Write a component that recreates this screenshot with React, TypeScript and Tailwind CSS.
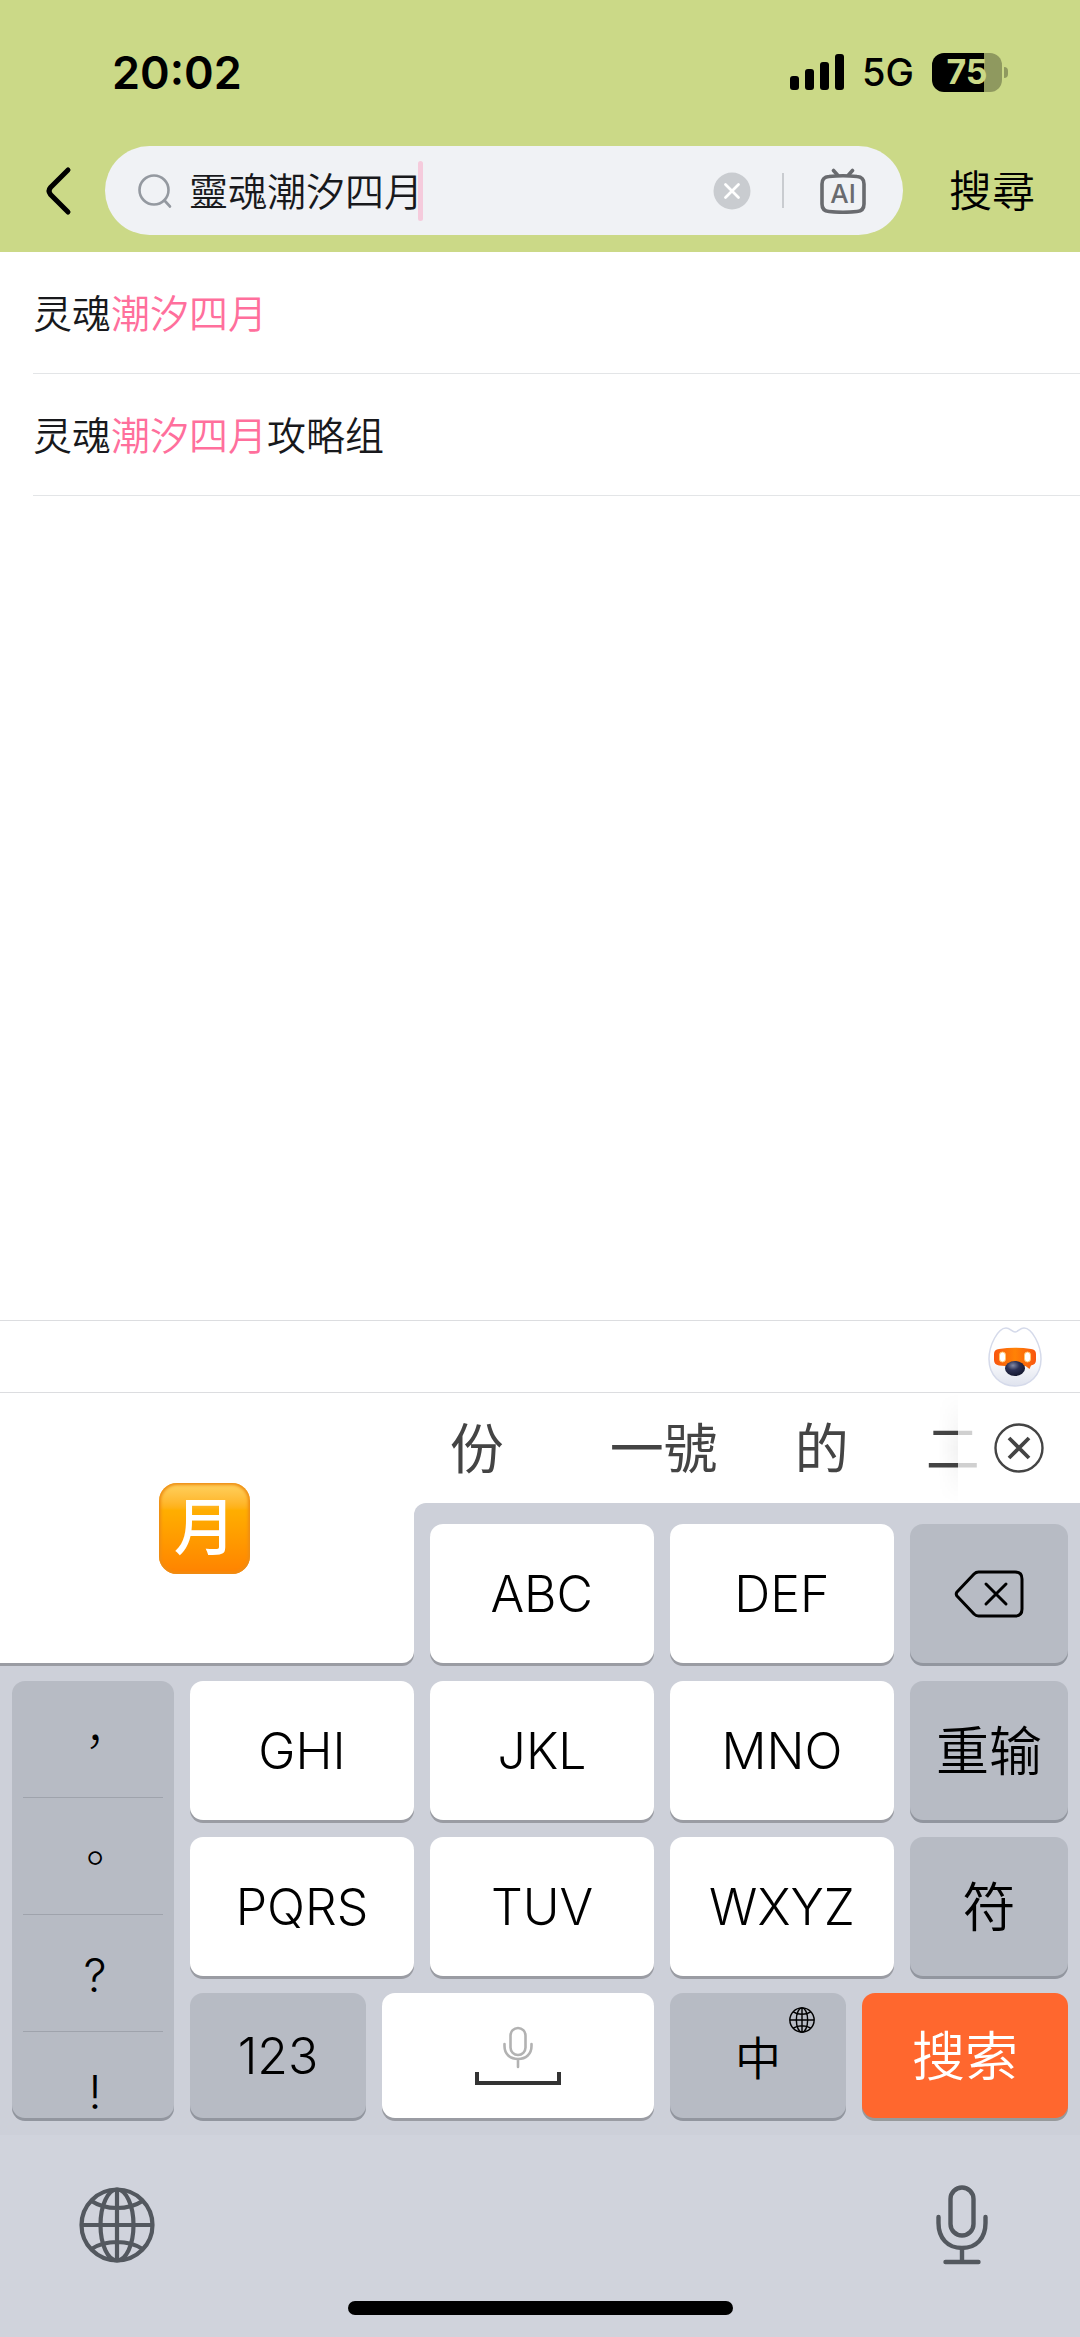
import { useState } from 'react'
import type { ReactNode } from 'react'

// Suggestions are split so the part matching the query can be tinted
const SUGGESTIONS = [
  { before: '灵魂', match: '潮汐四月', after: '' },
  { before: '灵魂', match: '潮汐四月', after: '攻略组' },
]

const PUNCTUATION = ['，', '。', '?', '!']

export default function App() {
  return (
    <div className="flex min-h-screen flex-col bg-white font-['Inter','Noto_Sans_CJK_SC',sans-serif] text-[#18191c]">
      <header className="bg-[#cbd987] pb-[17px] text-black">
        <StatusBar />
        <SearchBar />
      </header>

      <main className="flex-1">
        <ul className="pl-[33px]">
          {SUGGESTIONS.map((item) => (
            <li key={item.before + item.match + item.after} className="border-b border-[#e3e5e7]">
              <a href="#" className="flex h-[121px] items-center pt-1 text-[39px] font-[350]">
                <span>{item.before}</span>
                <span className="text-[#ff6f9c]">{item.match}</span>
                <span>{item.after}</span>
              </a>
            </li>
          ))}
        </ul>
      </main>

      <Keyboard />
    </div>
  )
}

function StatusBar() {
  return (
    <div className="flex h-[146px] items-center justify-between pr-[72px] pb-[2px] pl-[112px]">
      <span className="text-[45px] leading-none font-semibold">20:02</span>
      <div className="flex items-center">
        <svg width="54" height="36" viewBox="0 0 54 36" aria-label="Signal">
          <rect x="0" y="22" width="9" height="14" rx="3" />
          <rect x="15" y="15" width="9" height="21" rx="3" />
          <rect x="30" y="8" width="9" height="28" rx="3" />
          <rect x="45" y="0" width="9" height="36" rx="3" />
        </svg>
        <span className="ml-[18px] text-[38px] leading-none font-medium">5G</span>
        <div className="ml-[18px] flex items-center gap-[2px]">
          <div className="flex h-[39px] w-[70px] items-center justify-center rounded-[12px] bg-linear-to-r from-black from-75% to-[#8f995f] to-75%">
            <span className="text-[34px] leading-none font-bold text-[#cbd987]">75</span>
          </div>
          <span className="h-[11px] w-1 rounded-r-full bg-[#8f995f]" />
        </div>
      </div>
    </div>
  )
}

function SearchBar() {
  const [query, setQuery] = useState('靈魂潮汐四月')

  return (
    <form className="flex items-center" onSubmit={(e) => e.preventDefault()}>
      <button type="button" aria-label="返回" className="flex w-[105px] justify-start pl-[43px]">
        <svg width="32" height="54" viewBox="0 0 32 54" fill="none" stroke="currentColor" strokeWidth="5" strokeLinecap="round">
          <path d="M25 6 L7.500 23.500 Q4.500 27 7.500 30.500 L25 48" />
        </svg>
      </button>

      <div className="flex h-[89px] flex-1 items-center rounded-full bg-[#f0f2f5] pr-[37px] pl-[32px]">
        <svg width="36" height="36" viewBox="0 0 36 36" fill="none" stroke="#9499a0" strokeWidth="2.600" strokeLinecap="round">
          <circle cx="17" cy="17" r="14.500" />
          <path d="M27.500 27.500 L33 33.500" />
        </svg>
        <div className="relative ml-[16px]">
          <input
            type="text"
            aria-label="搜尋"
            value={query}
            onChange={(e) => setQuery(e.target.value)}
            className="block field-sizing-content h-[60px] bg-transparent pb-[3px] font-['Inter','Noto_Sans_CJK_TC',sans-serif] text-[39px] font-[350] text-[#18191c] outline-none"
          />
          <span className="absolute top-0 right-0 h-[60px] w-[5px] rounded-full bg-[#f5cbdc]" />
        </div>
        <button type="button" aria-label="清除" className="ml-auto" onClick={() => setQuery('')}>
          <svg width="38" height="38" viewBox="0 0 38 38" fill="none">
            <circle cx="19" cy="19" r="18.500" fill="#c9ccd0" />
            <path d="M12.500 12.500 L25.500 25.500 M25.500 12.500 L12.500 25.500" stroke="#fff" strokeWidth="2.800" strokeLinecap="round" />
          </svg>
        </button>
        <span className="mx-[31px] h-[35px] w-[2px] bg-[#c9ccd0]" />
        <button type="button" aria-label="AI" className="ml-[5px]">
          <svg width="46" height="46" viewBox="0 0 46 46" fill="none" stroke="#696b6f" strokeWidth="3.600" strokeLinecap="round">
            <path d="M9 8.500 Q23 7 37 8.500 Q44 9 44 16 V36 Q44 43 37 43.500 Q23 45 9 43.500 Q2 43 2 36 V16 Q2 9 9 8.500 Z" />
            <path d="M13.500 2.500 L17.500 7 M32.500 2.500 L28.500 7" />
            <text x="23" y="35" textAnchor="middle" fontSize="26" fontWeight="500" fill="#696b6f" stroke="none">AI</text>
          </svg>
        </button>
      </div>

      <button type="submit" className="pr-[45px] pl-[46px] font-['Inter','Noto_Sans_CJK_TC',sans-serif] text-[43px] leading-[60px] font-[350]">
        搜尋
      </button>
    </form>
  )
}

function Keyboard() {
  return (
    <section className="bg-[#cdd0d9] text-black">
      <div className="flex h-[73px] items-center justify-end border-y border-[#dcdde0] bg-white pr-[36px]">
        <button type="button" aria-label="助手">
          <MascotIcon />
        </button>
      </div>

      {/* Picked candidate spans the strip and the first key row */}
      <div className="flex">
        <button type="button" className="flex w-[38.3%] items-center justify-center rounded-br-[12px] bg-white pr-1 shadow-[0_3px_0_#9a9ca3]">
          <span className="flex size-[91px] items-center justify-center rounded-[18px] bg-linear-to-b from-[#ffd25e] via-[#ffae00] via-30% to-[#ff8200] text-[62px] leading-none font-medium text-white shadow-[inset_0_0_3px_2px_#ee8d14]">
            月
          </span>
        </button>

        <div className="min-w-0 flex-1 bg-white">
          <CandidateStrip />
          <div className="grid grid-cols-[224fr_224fr_158fr] gap-4 rounded-tl-[12px] bg-[#cdd0d9] pt-[21px] pr-3 pl-4">
            <Key>ABC</Key>
            <Key>DEF</Key>
            <Key tone="gray" label="刪除">
              <svg width="70" height="48" viewBox="0 0 70 48" fill="none" stroke="currentColor" strokeWidth="3" strokeLinejoin="round" strokeLinecap="round">
                <path d="M24.500 2 H61 Q68 2 68 9 V39 Q68 46 61 46 H24.500 Q22 46 20 44 L3 26 Q1.500 24 3 22 L20 4 Q22 2 24.500 2 Z" />
                <path d="M32 14 L52 34 M52 14 L32 34" />
              </svg>
            </Key>
          </div>
        </div>
      </div>

      <div className="grid grid-cols-[162fr_224fr_224fr_224fr_158fr] gap-x-4 gap-y-[17px] px-3 pt-[18px] pb-[17px]">
        <div className="row-span-3 flex flex-col rounded-[13px] bg-[#b7bbc4] px-[11px] shadow-[0_3px_0_#92969f]">
          {PUNCTUATION.map((mark) => (
            <button
              key={mark}
              type="button"
              className="flex h-[117px] items-start justify-center border-b border-[#9fa3ac] pt-[37px] pl-1 font-['Inter','Noto_Sans_CJK_TC',sans-serif] text-[46px] leading-none font-light last:h-[86px] last:border-b-0"
            >
              {mark}
            </button>
          ))}
        </div>
        <Key>GHI</Key>
        <Key>JKL</Key>
        <Key>MNO</Key>
        <Key tone="gray" cjk>重输</Key>
        <Key>PQRS</Key>
        <Key>TUV</Key>
        <Key>WXYZ</Key>
        <Key tone="gray" cjk>符</Key>

        <div className="col-span-2 grid grid-cols-[176fr_272fr] gap-4">
          <Key tone="gray" short>123</Key>
          <Key short label="空格">
            <svg width="86" height="60" viewBox="0 0 86 60" fill="none">
              <g stroke="#b2b2b2" strokeWidth="2.600" strokeLinecap="round">
                <rect x="35.500" y="2" width="15" height="27" rx="7.500" />
                <path d="M29.500 18 V20 C29.500 28 35 33 43 33 C51 33 56.500 28 56.500 20 V18 M43 33 V41" />
              </g>
              <path d="M2 46 V57 H84 V46" stroke="#333" strokeWidth="4" />
            </svg>
          </Key>
        </div>
        <div className="col-span-2 grid grid-cols-[176fr_206fr] gap-4">
          <Key tone="gray" short cjk>
            <span className="text-[46px]">中</span>
            <span className="absolute top-[14px] right-[31px]">
              <GlobeIcon size={26} strokeWidth={4.2} />
            </span>
          </Key>
          <Key tone="orange" short cjk>搜索</Key>
        </div>
      </div>

      <div className="bg-[#d0d3dc] pb-[22px]">
        <div className="flex items-center justify-between pt-[50px] pr-[91px] pl-[79px] text-[#53585f]">
          <button type="button" aria-label="切換鍵盤">
            <GlobeIcon size={76} strokeWidth={4.2} />
          </button>
          <button type="button" aria-label="聽寫">
            <svg width="54" height="80" viewBox="0 0 54 80" fill="none" stroke="currentColor" strokeWidth="4.400" strokeLinecap="round">
              <rect x="15.500" y="2.500" width="23" height="48" rx="11.500" />
              <path d="M3.500 32 V38 C3.500 53 12.500 63 27 63 C41.500 63 50.500 53 50.500 38 V32 M27 63 V77 M10.500 77 H43.500" />
            </svg>
          </button>
        </div>
        <div className="mx-auto mt-[36px] h-[14px] w-[385px] rounded-full bg-black" />
      </div>
    </section>
  )
}

function CandidateStrip() {
  return (
    <div className="relative flex h-[110px] items-center overflow-hidden pt-[2px] pl-[36px] text-[54px] whitespace-nowrap text-[#444]">
      <button type="button" className="w-[160px] shrink-0 text-left">份</button>
      <div className="flex gap-[77px]">
        <button type="button">一號</button>
        <button type="button">的</button>
        <button type="button">二</button>
      </div>
      <div className="absolute inset-y-0 right-0 flex">
        <div className="w-[20px] bg-linear-to-r from-transparent to-black/5 mask-y-from-50%" />
        <button type="button" aria-label="關閉" className="flex w-[122px] items-center justify-center bg-white/75">
          <svg width="50" height="50" viewBox="0 0 50 50" fill="none" stroke="#444">
            <circle cx="25" cy="25" r="23.500" strokeWidth="2.400" />
            <path d="M15 15 L35 35 M35 15 L15 35" strokeWidth="3.800" />
          </svg>
        </button>
      </div>
    </div>
  )
}

const KEY_TONES = {
  white: 'bg-white shadow-[0_3px_0_#9a9ca3]',
  gray: 'bg-[#b7bbc4] shadow-[0_3px_0_#92969f]',
  orange: 'bg-[#ff672e] text-white shadow-[0_3px_0_#979a9c]',
}

function Key({
  children,
  tone = 'white',
  short = false,
  cjk = false,
  label,
}: {
  children: ReactNode
  tone?: keyof typeof KEY_TONES
  short?: boolean
  cjk?: boolean
  label?: string
}) {
  return (
    <button
      type="button"
      aria-label={label}
      className={`relative flex items-center justify-center rounded-[13px] leading-none ${
        cjk ? 'pt-1 text-[53px] font-[350]' : 'text-[50px] font-light'
      } ${short ? 'h-[125px]' : 'h-[139px]'} ${KEY_TONES[tone]}`}
    >
      {children}
    </button>
  )
}

function GlobeIcon({ size, strokeWidth }: { size: number; strokeWidth: number }) {
  return (
    <svg width={size} height={size} viewBox="0 0 76 76" fill="none" stroke="currentColor" strokeWidth={strokeWidth}>
      <circle cx="38" cy="38" r="35.500" />
      <ellipse cx="38" cy="38" rx="16.500" ry="35.500" />
      <path d="M38 2 V74 M2 38 H74 M12.500 14 Q23 21 38 21 Q53 21 63.500 14 M12.500 62 Q23 55 38 55 Q53 55 63.500 62" />
    </svg>
  )
}

function MascotIcon() {
  return (
    <svg width="58" height="64" viewBox="0 0 58 64" fill="none">
      <defs>
        <linearGradient id="mascot-head" x1="0" y1="0" x2="0" y2="1">
          <stop offset="0.500" stopColor="#fff" />
          <stop offset="1" stopColor="#dfe3ee" />
        </linearGradient>
        <linearGradient id="mascot-visor" x1="0" y1="0" x2="1" y2="0">
          <stop offset="0" stopColor="#f9560f" />
          <stop offset="0.500" stopColor="#ff8205" />
          <stop offset="1" stopColor="#f9560f" />
        </linearGradient>
        <radialGradient id="mascot-nose" cx="0.400" cy="0.300" r="0.700">
          <stop offset="0" stopColor="#8289a5" />
          <stop offset="0.450" stopColor="#2b3054" />
          <stop offset="1" stopColor="#14182f" />
        </radialGradient>
      </defs>
      <path
        d="M29 7 C32 7 34 3 38 3 C46 3 55 20 55 34 C55 50 44 61 29 61 C14 61 3 50 3 34 C3 20 12 3 20 3 C24 3 26 7 29 7 Z"
        fill="url(#mascot-head)"
        stroke="#d5daea"
        strokeWidth="1.500"
      />
      <path
        d="M13 24 Q29 21.500 45 24 Q50 24.500 50 29 V35 Q50 39.500 45 40.500 L43.500 44 L39.500 41 Q29 42 13 40.500 Q8 39.500 8 35 V29 Q8 24.500 13 24 Z"
        fill="url(#mascot-visor)"
      />
      <rect x="13.500" y="27" width="6" height="10" rx="3" fill="#fff" stroke="#ffc670" />
      <rect x="38.500" y="27" width="6" height="10" rx="3" fill="#fff" stroke="#ffc670" />
      <ellipse cx="29" cy="43.500" rx="10" ry="7.500" fill="url(#mascot-nose)" />
    </svg>
  )
}
